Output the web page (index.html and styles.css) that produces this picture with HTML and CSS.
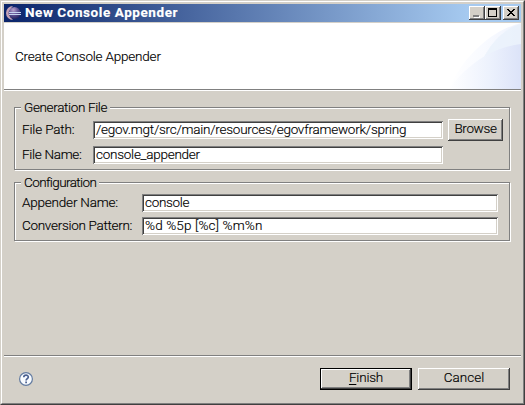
FILE: index.html
```html
<!DOCTYPE html>
<html lang="en">
<head>
<meta charset="utf-8">
<title>New Console Appender</title>
<link rel="stylesheet" href="styles.css">
</head>
<body>
<main class="window">
  <div class="frame">
    <header class="titlebar">
      <svg class="logo" width="16" height="16" viewBox="0 0 16 16">
        <defs><radialGradient id="orb" cx=".4" cy=".25" r=".75"><stop offset="0" stop-color="#b8a4cc"/><stop offset=".5" stop-color="#655899"/><stop offset="1" stop-color="#292560"/></radialGradient></defs>
        <path d="M7 1A7 7 0 0 0 7 15A9 9 0 0 1 4 8A9 9 0 0 1 7 1Z" fill="#c5a3b6"/>
        <circle cx="8.5" cy="8" r="6" fill="url(#orb)"/>
        <path d="M3 7.5H15M3 9.5H15" stroke="#c5d4ef"/>
      </svg>
      <h1 class="title">New Console Appender</h1>
      <div class="controls">
        <span class="control"><svg width="16" height="14" shape-rendering="crispEdges"><path d="M5 10H11V12H5Z" fill="#fff"/><path d="M4 9H10V11H4Z" fill="#808080"/></svg></span>
        <span class="control"><svg width="16" height="14" shape-rendering="crispEdges"><path d="M3 2H12V11H3ZM4 4V10H11V4Z" fill="#000" fill-rule="evenodd"/></svg></span>
        <span class="control close"><svg width="16" height="14" shape-rendering="crispEdges"><path d="M4 3h2v1h1v1h2v-1h1v-1h2v1h-1v1h-1v1h-1v1h1v1h1v1h1v1h-2v-1h-1v-1h-2v1h-1v1h-2v-1h1v-1h1v-1h1v-1h-1v-1h-1v-1h-1z" fill="#000"/></svg></span>
      </div>
    </header>
    <section class="banner">
      <p class="t-create">Create Console Appender</p>
      <svg class="swoosh" width="75" height="66" viewBox="0 0 75 66">
        <defs>
          <linearGradient id="outer"><stop offset="0" stop-color="#fff"/><stop offset=".5" stop-color="#f8faff"/><stop offset="1" stop-color="#eff3fd"/></linearGradient>
          <linearGradient id="inner"><stop offset="0" stop-color="#fff"/><stop offset=".55" stop-color="#edf2fd"/><stop offset="1" stop-color="#dce3f8"/></linearGradient>
        </defs>
        <path d="M3 66C15 37 43 8 75 0V66Z" fill="url(#outer)"/>
        <path d="M37 36C44 21 58 5 75 1V28Z" fill="#e7effb" opacity=".65"/>
        <path d="M3 66C20 43 44 25 75 21V66Z" fill="url(#inner)"/>
      </svg>
    </section>
    <section class="content">
      <div class="group generation">
        <h2 class="legend"><span class="t-gen">Generation File</span></h2>
        <div class="line"><span class="label t-path">File Path:</span><div class="field"><span class="t-pathv">/egov.mgt/src/main/resources/egovframework/spring</span></div><div class="button browse"><span class="t-browse">Browse</span></div></div>
        <div class="line second"><span class="label t-name">File Name:</span><div class="field"><span class="t-namev">console_appender</span></div></div>
      </div>
      <div class="group configuration">
        <h2 class="legend"><span class="t-conf">Configuration</span></h2>
        <div class="line"><span class="label t-app">Appender Name:</span><div class="field"><span class="t-appv">console</span></div></div>
        <div class="line"><span class="label t-pat">Conversion Pattern:</span><div class="field"><span class="t-patv">%d %5p [%c] %m%n</span></div></div>
      </div>
    </section>
    <footer class="footer">
      <svg class="help" width="16" height="16" viewBox="0 0 16 16"><circle cx="8" cy="8" r="6.4" fill="#f8fbff" stroke="#637ba0" stroke-width="1.2"/><path d="M5.8 6.3C5.8 3.5 10.3 3.6 10.3 6C10.3 7.6 8.1 7.7 8.1 9.5M8.1 10.5V12.3" fill="none" stroke="#4a6090" stroke-width="1.7"/></svg>
      <div class="default"><div class="button"><span class="t-finish"><u>F</u>inish</span></div></div>
      <div class="button cancel"><span class="t-cancel">Cancel</span></div>
    </footer>
  </div>
</main>
</body>
</html>
```

FILE: styles.css
```css
* { box-sizing: border-box; }
body, h1, h2, p { margin: 0; font-weight: 300; }
body { width: 525px; height: 405px; overflow: hidden; color: #000; font: 300 13.5px/16px Roboto, "Liberation Sans", sans-serif; white-space: nowrap; -webkit-text-stroke: .15px; }
svg { display: block; flex: none; }
.window { height: 405px; background: #d4d0c8; border: 1px solid; border-color: #d4d0c8 #404040 #404040 #d4d0c8; }
.frame { height: 403px; border: 1px solid; border-color: #fff #808080 #808080 #fff; padding: 2px 2px 0; display: flex; flex-direction: column; }
.titlebar { height: 18px; display: flex; align-items: center; padding: 0 2px 0 2px; background: linear-gradient(90deg, #0a246a, #a6caf0 90%); }
.title { margin-left: 3px; color: #fff; font-size: 13.5px; font-weight: 700; line-height: 17px; letter-spacing: .57px; padding-bottom: 1px; }
.controls { display: flex; margin-left: auto; }
.control, .button { background: #d4d0c8; box-shadow: inset -1px -1px #404040, inset 1px 1px #fff, inset -2px -2px #808080; }
.control { width: 16px; height: 14px; }
.close { margin-left: 2px; }
.banner { margin-top: 1px; height: 68px; flex: none; background: #fff; border-bottom: 1px solid #fff; box-shadow: inset 0 -1px #808080; display: flex; justify-content: space-between; padding-left: 11px; }
.banner p { margin-top: 25px; }
.content { padding: 16px 10px 0; height: 264px; flex: none; }
.group { position: relative; width: 496px; border: 1px solid #808080; box-shadow: 1px 1px #fff, inset 1px 1px #fff; padding-left: 8px; }
.generation { height: 63px; }
.configuration { height: 59px; margin-top: 12px; }
.legend { position: absolute; top: -9px; left: 6px; padding: 0 3px; height: 17px; background: #d4d0c8; font-size: inherit; }
.generation .legend { width: 89px; }
.configuration .legend { width: 78px; }
.line { display: flex; align-items: center; height: 18px; }
.generation .line { height: 22px; margin-top: 11px; }
.generation .second { height: 18px; margin-top: 5px; }
.configuration .line { margin-top: 5px; }
.configuration .legend + .line { margin-top: 11px; }
.label { width: 70px; flex: none; margin-left: -1px; margin-right: 1px; padding-bottom: 2px; }
.field { width: 350px; height: 18px; background: #fff; box-shadow: inset 1px 1px #808080, inset -1px -1px #fff, inset 2px 2px #404040, inset -2px -2px #d4d0c8; padding-left: 3px; line-height: 16px; }
.configuration .label { width: 119px; }
.configuration .field { width: 356px; }
.button { width: 92px; height: 22px; display: flex; justify-content: center; line-height: 18px; }
.browse { width: 55px; margin-left: 5px; }
.footer { border-top: 1px solid #808080; box-shadow: inset 0 1px #fff; height: 48px; display: flex; align-items: flex-start; padding: 12px 11px 0 14px; }
.help { margin-top: 3px; }
.default { margin-left: auto; width: 92px; height: 22px; padding: 1px; background: #000; }
.default .button { width: 90px; height: 20px; line-height: 16px; }
.cancel { margin-left: 6px; }
u { text-underline-offset: 2px; }
.t-create { letter-spacing: -.2px; }
.t-gen { letter-spacing: -.35px; }
.t-path { letter-spacing: -.15px; }
.t-name { letter-spacing: -.3px; }
.t-pathv { letter-spacing: -.25px; }
.t-namev { letter-spacing: -.25px; }
.t-conf { letter-spacing: -.6px; }
.t-app { letter-spacing: -.2px; }
.t-pat { letter-spacing: -.3px; }
.t-appv { letter-spacing: -.3px; }
.t-patv { letter-spacing: .15px; }
.t-browse { letter-spacing: -.35px; }
.t-finish { letter-spacing: -.2px; }
```
